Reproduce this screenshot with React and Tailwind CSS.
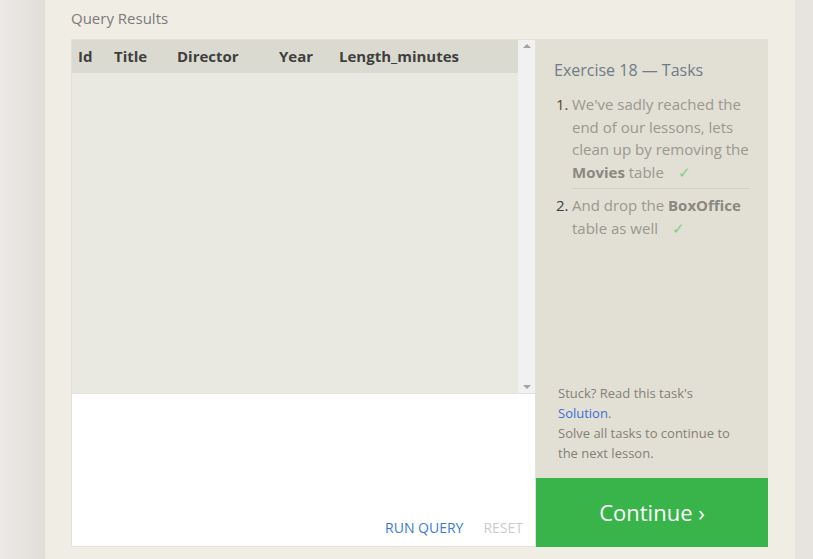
import React from "react"

const columns = [
  { name: "Id", w: "w-[36px]" },
  { name: "Title", w: "w-[63px]" },
  { name: "Director", w: "w-[102px]" },
  { name: "Year", w: "w-[60px]" },
  { name: "Length_minutes", w: "w-[150px]" },
]

function Check() {
  return <span className="ml-[10px] text-[#7ccf86]">✓</span>
}

function ResultsTable() {
  return (
    <div className="flex h-[353px] bg-[#eae9e1]">
      <div className="flex-1">
        <div className="flex h-[33px] items-center bg-[#dbdad0] pl-[6px] text-[15px] font-bold text-[#3f3f3f]">
          {columns.map((c) => (
            <div key={c.name} className={c.w}>
              {c.name}
            </div>
          ))}
        </div>
      </div>
      <div className="flex w-[17px] flex-col items-center justify-between bg-[#f1f1f1] py-[4px]">
        <div className="h-0 w-0 border-x-[4px] border-b-[4px] border-x-transparent border-b-[#a3a3a3]" />
        <div className="h-0 w-0 border-x-[4px] border-t-[4px] border-x-transparent border-t-[#a3a3a3]" />
      </div>
    </div>
  )
}

function Editor() {
  return (
    <div className="flex h-[153px] items-end justify-end border-t border-[#e3e1d9] bg-white pb-[8px] pr-[12px] text-[14px]">
      <span className="mr-[20px] text-[#3b7ad8]">RUN QUERY</span>
      <span className="text-[#cccccc]">RESET</span>
    </div>
  )
}

function TasksPanel() {
  return (
    <div className="flex w-[232px] flex-col bg-[#e2dfd4]">
      <div className="flex flex-1 flex-col px-[18px] pt-[18px]">
        <h3 className="text-[16px] text-[#6f7b88]">Exercise 18 — Tasks</h3>
        <ol className="mt-[11px] text-[15px] leading-[22.7px] text-[#9a9890]">
          <li className="flex">
            <span className="w-[18px] shrink-0 pl-[2px] text-[#5e4a2e]">1.</span>
            <div className="border-b border-[#d3d0c5] pb-[4px]">
              We've sadly reached the end of our lessons, lets clean up by removing the{" "}
              <b className="text-[#8a8880]">Movies</b> table <Check />
            </div>
          </li>
          <li className="mt-[5px] flex">
            <span className="w-[18px] shrink-0 pl-[2px] text-[#3d4048]">2.</span>
            <div>
              And drop the <b className="text-[#8a8880]">BoxOffice</b> table as well <Check />
            </div>
          </li>
        </ol>
        <div className="mt-auto pb-[15px] pl-[4px] text-[13px] leading-[20px] text-[#857f78]">
          Stuck? Read this task's
          <br />
          <span className="text-[#3a6fd9]">Solution</span>.
          <br />
          Solve all tasks to continue to the next lesson.
        </div>
      </div>
      <div className="flex h-[69px] items-center justify-center bg-[#39b44a] text-[22px] text-white">
        Continue ›
      </div>
    </div>
  )
}

export default function App() {
  return (
    <div
      className="flex h-[559px] overflow-hidden bg-[#e8e4e0]"
      style={{ fontFamily: '"Open Sans", sans-serif' }}
    >
      <div className="w-[45px] bg-gradient-to-r from-[#ede9e6] to-[#e1ddd9]" />
      <div className="w-[750px] bg-[#f0ede5] pl-[26px] pr-[27px]">
        <div className="pt-[7px] text-[15px] leading-[22px] text-[#7a7a7a]">Query Results</div>
        <div className="mt-[10px] flex border-t border-[#e3e1d9]">
          <div className="flex w-[465px] flex-col border-x border-b border-[#e3e1d9]">
            <ResultsTable />
            <Editor />
          </div>
          <TasksPanel />
        </div>
      </div>
      <div className="flex-1 bg-[#e7e3df]" />
    </div>
  )
}
